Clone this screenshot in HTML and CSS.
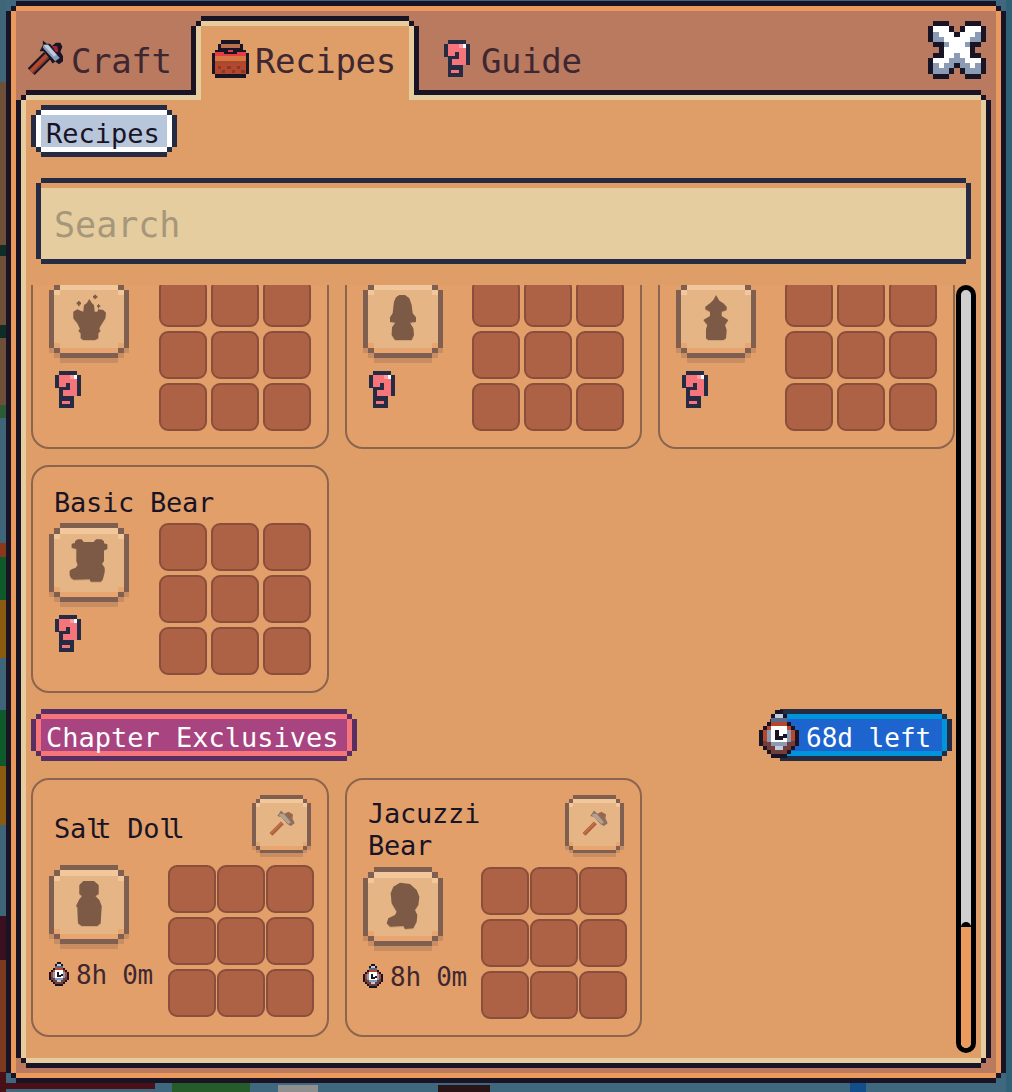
FILE: index.html
```html
<!DOCTYPE html>
<html lang="en">
<head>
<meta charset="utf-8">
<title>Recipes</title>
<link rel="stylesheet" href="styles.css">
</head>
<body>
<svg class="defs" width="0" height="0" aria-hidden="true">
  <symbol id="box" viewBox="0 0 80 84">
    <g shape-rendering="crispEdges">
      <path fill="#c98d63" d="M11 79h58v5H11zM5 74h6v5H5zM69 74h6v5h-6zM0 69h5v5H0zM75 69h5v5h-5z"/>
      <path fill="#e5b586" d="M5 11h70v58H5zM11 5h58v6H11z"/>
      <path fill="#f2c79b" d="M11 5h58v6H11zM5 11h6v5H5zM69 11h6v5h-6z"/>
      <path fill="#e8a56f" d="M11 69h58v5H11zM5 64h6v5H5zM69 64h6v5h-6z"/>
      <path fill="#7f6050" d="M11 0h58v5H11zM5 5h6v6H5zM69 5h6v6h-6zM0 11h5v58H0zM75 11h5v58h-5zM5 69h6v5H5zM69 69h6v5h-6zM11 74h58v5H11z"/>
    </g>
  </symbol>
  <symbol id="ques" viewBox="0 0 26 38">
    <g shape-rendering="crispEdges">
      <path fill="#262b44" d="M4 0h18v4h4v21h-7v12H4V17H0V4h4z"/>
      <path fill="#f6757a" d="M4 4h18v21H8v-6h7v-7h-4v4H4zM7 30h8v3H7z"/>
      <path fill="#ff9ca0" d="M15 4h4v4h-4z"/>
      <path fill="#fff" d="M19 4h3v4h-3z"/>
    </g>
  </symbol>
  <symbol id="clock" viewBox="27 33 120 143">
    <g shape-rendering="crispEdges">
      <path fill="#181425" d="M75 33h24v12h12v23h12v12h12v11h12v48h-12v12h-12v12h-12v12H63v-12H51v-12H39v-12H27V91h12V80h12V68h12V45h12z"/>
      <path fill="#c0cbdc" d="M75 45h24v12H75z"/>
      <path fill="#5a6988" d="M63 57h48v11H63z"/>
      <path fill="#b5482c" d="M63 68h48v12h12v12h12v33H39V92h12V80h12z"/>
      <path fill="#733e39" d="M39 125h96v14h-12v12h-12v12H63v-12H51v-12H39z"/>
      <path fill="#8b9bb4" d="M51 92h72v36h-12v12H63v-12H51z"/>
      <path fill="#c0cbdc" d="M75 140h24v12H75z"/>
      <path fill="#fff" d="M63 80h48v48H63z"/>
      <path fill="#181425" d="M75 92h12v18h12v-6h12v12H99v6H75z"/>
    </g>
  </symbol>
  <symbol id="hammer" viewBox="78 118 114 114">
    <path fill="none" stroke="#181425" stroke-width="30" d="M94 214l50-50"/>
    <path fill="none" stroke="#b5482c" stroke-width="16" d="M94 214l50-50"/>
    <path fill="none" stroke="#733e39" stroke-width="5" d="M98 219l50-50"/>
    <path fill="#181425" d="M130 118l12 10h10l6 7 12-10h14l6 12-6 16 6 10 8 14-18 14-12-8-8 6-14-22-14-16h-12l10-18z"/>
    <path fill="#a22633" d="M158 135h16l4 16-8 4z"/>
    <path fill="#8b9bb4" d="M132 130h14l36 42-14 10-38-42z"/>
    <path fill="#c0cbdc" d="M136 132h10l26 30-8 6-30-34z"/>
  </symbol>
  <symbol id="hammer-soft" viewBox="0 0 77 77">
    <path fill="none" stroke="#a55f40" stroke-width="12" d="M6 71l34-34"/>
    <path fill="none" stroke="#c96f43" stroke-width="5" d="M6 69l32-32"/>
    <path fill="#8d6f5e" d="M36 0l10 10 12-6 14 8-2 12 7 14-12 8-10-6-18-20-12-4z"/>
    <path fill="#b3a092" d="M32 10h12l22 26-8 4-28-26z"/>
    <path fill="#a8613f" d="M52 8h14v12l-6 2z"/>
  </symbol>
</svg>

<main class="window">
  <nav class="tabs">
    <div class="tab tab-craft">
      <svg class="tab-icon"><use href="#hammer"/></svg>
      <span>Craft</span>
    </div>
    <div class="tab tab-active">
      <svg class="tab-icon" viewBox="635 118 110 112">
        <g shape-rendering="crispEdges">
          <path fill="#181425" d="M663 118h55v12h9v18h8v8h10v64h-10v10h-90v-10h-10v-64h10v-8h9v-18h9z"/>
          <path fill="#b86f50" d="M663 130h55v10h-55z"/>
          <path fill="#e43b44" d="M645 152h27v13h-27zM708 152h27v13h-27zM672 158h36v7h-36zM682 146h16v6h-16z"/>
          <path fill="#d77643" d="M645 165h90v15h-90z"/>
          <path fill="#a9492e" d="M645 180h90v10h-90z"/>
          <path fill="#b5482c" d="M645 190h90v30h-90z"/>
          <path fill="#8a3a2a" d="M652 195h10v8h-10zM680 195h10v8h-10zM708 195h10v8h-10zM665 207h10v8h-10zM694 207h10v8h-10zM722 207h10v8h-10z"/>
        </g>
      </svg>
      <span>Recipes</span>
    </div>
    <div class="tab tab-guide">
      <svg class="tab-icon-q"><use href="#ques"/></svg>
      <span>Guide</span>
    </div>
    <svg class="close" viewBox="0 0 11 11" aria-label="Close">
      <g shape-rendering="crispEdges">
        <path fill="#fff" d="M1 1h3v1h1v1h1V2h1V1h3v3H8v5h2v1H7V9H6V8H5v1H4v1H1V9h2V4H1z"/>
        <path fill="#fff" d="M1 7h9v2H1z"/>
        <path fill="#8b9bb4" d="M1 2h1v1H1zM9 2h1v1H9zM1 3h2v1H1zM8 3h2v1H8zM3 4h1v1H3zM7 4h1v1H7zM5 6h1v1H5zM4 7h3v1H4zM1 8h1v1H1zM3 8h2v1H3zM6 8h2v1H6zM9 8h1v1H9zM1 9h3v1H1zM7 9h3v1H7z"/>
        <path fill="#181425" d="M1 0h3v1H1zM7 0h3v1H7zM0 1h1v3H0zM10 1h1v3h-1zM4 1h1v1H4zM6 1h1v1H6zM5 2h1v1H5zM1 4h2v1H1zM8 4h2v1H8zM2 5h1v1H2zM8 5h1v1H8zM1 6h2v1H1zM8 6h2v1H8zM0 7h1v3H0zM10 7h1v3h-1zM5 8h1v1H5zM4 9h1v1H4zM6 9h1v1H6zM1 10h3v1H1zM7 10h3v1H7z"/>
      </g>
    </svg>
  </nav>

  <section class="panel">
    <div class="pill pill-recipes"><span>Recipes</span></div>
    <div class="search">Search</div>

    <div class="list-row">
      <div class="list">
        <div class="list-inner">
          <div class="grid">
            <article class="card">
              <div class="title title-hidden"></div>
              <div class="card-body">
                <div class="card-left">
                  <svg class="ibox" viewBox="0 0 80 84"><use href="#box" width="80" height="84"/>
                    <g class="sil" transform="scale(.3333) translate(-87 -27)">
                      <path d="M208 87l8 13 6 5 2 20h8l3-7 15 2 8 8-2 17-16 25-2 8 4 4-7 8v15l-10 5h-35l-8-5v-15l-7-8 5-6-8-16-12-15v-20l12-7 10 4 8 3 2-20 8-5z"/>
                      <path d="M219 77h4v-3h5v3h4v6h-4v3h-5v-3h-4zM170 97h4v-4h5v4h4v6h-4v4h-5v-4h-4zM231 106h3v-4h3v4h4v4h-4v5h-3v-5h-3z"/>
                    </g>
                  </svg>
                  <svg class="ques"><use href="#ques"/></svg>
                </div>
                <div class="slots">
                  <i></i><i></i><i></i><i></i><i></i><i></i><i></i><i></i><i></i>
                </div>
              </div>
            </article>
            <article class="card">
              <div class="title title-hidden"></div>
              <div class="card-body">
                <div class="card-left">
                  <svg class="ibox" viewBox="0 0 80 84"><use href="#box" width="80" height="84"/>
                    <g class="sil" transform="scale(.3333) translate(-39 -27)">
                      <path d="M148 75h17l13 10 7 20 3 25 10 12v13l-18 3 10 17 2 20-7 15h-50l-10-15 1-23 10-14-16-3v-13l8-12 4-35 6-13z"/>
                    </g>
                  </svg>
                  <svg class="ques"><use href="#ques"/></svg>
                </div>
                <div class="slots">
                  <i></i><i></i><i></i><i></i><i></i><i></i><i></i><i></i><i></i>
                </div>
              </div>
            </article>
            <article class="card">
              <div class="title title-hidden"></div>
              <div class="card-body">
                <div class="card-left">
                  <svg class="ibox" viewBox="0 0 80 84"><use href="#box" width="80" height="84"/>
                    <g class="sil" transform="scale(.3333) translate(-978 -27)">
                      <path d="M1098 75l10 17 12 8 10 10v10l-15 5v13l20 12-10 15 5 15-2 25-8 5h-45l-7-5v-27l4-13-12-15 20-12v-13l-14-7v-8l14-10 10-10z"/>
                    </g>
                  </svg>
                  <svg class="ques"><use href="#ques"/></svg>
                </div>
                <div class="slots">
                  <i></i><i></i><i></i><i></i><i></i><i></i><i></i><i></i><i></i>
                </div>
              </div>
            </article>
            <article class="card">
              <div class="title">Basic Bear</div>
              <div class="card-body">
                <div class="card-left">
                  <svg class="ibox" viewBox="0 0 80 84"><use href="#box" width="80" height="84"/>
                    <g class="sil" transform="scale(.3333) translate(-87 -188)">
                      <path d="M165 243l8-6h12l6 8h30l7-8h16l8 6v6l10 3v14l-10 4v32l-6 8 8 12v14l-6 22-6 6h-30l-3-7-48 1-8-5-4-8v-14l6-4 12-5 6-8-4-12v-36l-14-4v-12l10-2z"/>
                    </g>
                  </svg>
                  <svg class="ques"><use href="#ques"/></svg>
                </div>
                <div class="slots">
                  <i></i><i></i><i></i><i></i><i></i><i></i><i></i><i></i><i></i>
                </div>
              </div>
            </article>
          </div>

          <div class="section-head">
            <div class="pill pill-chapter"><span>Chapter Exclusives</span></div>
            <div class="pill pill-time">
              <svg class="time-clock"><use href="#clock"/></svg>
              <span>68d left</span>
            </div>
          </div>

          <div class="grid">
            <article class="card card-chapter">
              <div class="card-head">
                <div class="title">Sa<span class="narrow">l</span>t Do<span class="narrow">ll</span></div>
                <svg class="ibox-small" viewBox="0 0 80 84"><use href="#box" width="80" height="84"/><use href="#hammer-soft" x="23" y="21" width="35" height="35"/></svg>
              </div>
              <div class="card-body">
                <div class="card-left">
                  <svg class="ibox" viewBox="0 0 80 84"><use href="#box" width="80" height="84"/>
                    <g class="sil" transform="scale(.3333) translate(-87 -285)">
                      <path d="M190 333h32l14 12v27l-10 6 12 12 7 18-3 52-10 8h-47l-11-8-2-48-4-4 10-20 8-10-8-6v-27z"/>
                    </g>
                  </svg>
                  <div class="brew"><svg class="brew-clock"><use href="#clock"/></svg><span>8h 0m</span></div>
                </div>
                <div class="slots">
                  <i></i><i></i><i></i><i></i><i></i><i></i><i></i><i></i><i></i>
                </div>
              </div>
            </article>
            <article class="card card-chapter">
              <div class="card-head">
                <div class="title">Jacuzzi Bear</div>
                <svg class="ibox-small" viewBox="0 0 80 84"><use href="#box" width="80" height="84"/><use href="#hammer-soft" x="23" y="21" width="35" height="35"/></svg>
              </div>
              <div class="card-body">
                <div class="card-left">
                  <svg class="ibox" viewBox="0 0 80 84"><use href="#box" width="80" height="84"/>
                    <g class="sil" transform="scale(.3333) translate(-39 -261)">
                      <path d="M150 308l30 4 20 18 8 20-3 25-10 15 7 15-2 20-10 20-25 2-5-9-40 2-10-10 5-15 20-10 5-10-15-25-3-30 8-20z"/>
                    </g>
                  </svg>
                  <div class="brew"><svg class="brew-clock"><use href="#clock"/></svg><span>8h 0m</span></div>
                </div>
                <div class="slots">
                  <i></i><i></i><i></i><i></i><i></i><i></i><i></i><i></i><i></i>
                </div>
              </div>
            </article>
          </div>
        </div>
      </div>
      <div class="scrollbar"><div class="thumb"></div></div>
    </div>
  </section>
</main>
</body>
</html>
```
FILE: styles.css
```css
* { box-sizing: border-box; }

html, body { margin: 0; height: 1092px; overflow: hidden; }

body {
  padding: 11px 16px 19px;
  font-family: "DejaVu Sans Mono", "Liberation Mono", monospace;
  background-color: #3f677e;
  background-image:
    linear-gradient(to bottom,
      #3f6579 0 82px, #6e4f38 82px 245px, #0f2c27 245px 256px, #6e4f38 256px 325px,
      #0f2c27 325px 338px, #6e4f38 338px 405px, #2e5a36 405px 418px, #3f6579 418px 543px,
      #8a3a1a 543px 557px, #0f5a2a 557px 600px, #8a5a10 600px 658px, #3f6579 658px 710px,
      #0f5a2a 710px 766px, #8a5a10 766px 825px, #3f6579 825px 916px,
      #3a1020 916px 960px, #7a3a20 960px 1072px, #4a1018 1072px 1092px),
    linear-gradient(#4a1018, #4a1018),
    linear-gradient(#265c2a, #265c2a),
    linear-gradient(#8f8f8f, #8f8f8f),
    linear-gradient(#2a1418, #2a1418),
    linear-gradient(#124e89, #124e89),
    linear-gradient(#2f6276, #2f6276);
  background-repeat: no-repeat;
  background-size: 6px 100%, 155px 6px, 78px 9px, 40px 7px, 52px 7px, 16px 9px, 6px 100%;
  background-position: 0 0, 0 1083px, 172px 1083px, 278px 1085px, 438px 1085px, 850px 1083px, 1006px 0;
}

.defs { display: block; }

.window {
  display: flex;
  flex-direction: column;
  height: 1062px;
  padding: 0 15px 15px 10px;
  background: #b97a5f;
  box-shadow:
    -5px 0 0 #eb9a5e, 5px 0 0 #eb9a5e, 0 -5px 0 #eb9a5e, 0 5px 0 #eb9a5e,
    -10px 0 0 #181425, 10px 0 0 #181425, 0 -10px 0 #181425, 0 10px 0 #181425,
    -5px -5px 0 #181425, 5px -5px 0 #181425, -5px 5px 0 #181425, 5px 5px 0 #181425;
}

/* Tabs */
.tabs {
  display: flex;
  align-items: flex-start;
  height: 89px;
  margin-left: -10px;
  margin-right: -5px;
  flex: none;
}

.tab {
  display: flex;
  align-items: center;
  height: 38px;
  margin-top: 29px;
  font-size: 34px;
  letter-spacing: -0.35px;
  color: #3e2731;
}

.tab span { padding-top: 4px; }

.tab-icon { width: 37px; height: 38px; flex: none; }
.tab-icon-q { width: 28px; height: 38px; flex: none; }

.tab-craft { width: 165px; margin-left: 10px; gap: 8px; }

.tab-active {
  position: relative;
  z-index: 1;
  width: 208px;
  height: 74px;
  margin: 15px 0 0 10px;
  padding: 14px 0 22px 11px;
  gap: 6px;
  background: #df9d68;
  box-shadow:
    -5px 0 0 #e5cda0, 5px 0 0 #e5cda0, 0 -5px 0 #e5cda0,
    -10px 0 0 #181425, 10px 0 0 #181425, 0 -10px 0 #181425,
    -5px -5px 0 #181425, 5px -5px 0 #181425;
  clip-path: polygon(-10px -10px, calc(100% + 10px) -10px, calc(100% + 10px) 69px, calc(100% + 5px) 69px, calc(100% + 5px) 74px, -5px 74px, -5px 69px, -10px 69px);
}

.tab-guide { margin-left: 34px; gap: 10px; }

.close { width: 58px; height: 58px; margin: 10px 0 0 auto; flex: none; }

/* Panel */
.panel {
  flex: 1;
  min-height: 0;
  display: flex;
  flex-direction: column;
  background: #df9d68;
  box-shadow:
    -5px 0 0 #e5cda0, 5px 0 0 #e5cda0, 0 -5px 0 #e5cda0, 0 5px 0 #e5cda0,
    -10px 0 0 #181425, 10px 0 0 #181425, 0 -10px 0 #181425, 0 10px 0 #181425,
    -5px -5px 0 #181425, 5px -5px 0 #181425, -5px 5px 0 #181425, 5px 5px 0 #181425;
}

.pill {
  display: flex;
  align-items: center;
  height: 32px;
  font-size: 27px;
  line-height: 32px;
  white-space: nowrap;
  flex: none;
}

.pill span { padding-top: 5px; }

.pill-recipes {
  width: 126px;
  margin: 15px 0 0 15px;
  padding-left: 5px;
  color: #181425;
  background: #b8c6dc;
  box-shadow:
    -5px 0 0 #fff, 5px 0 0 #fff, 0 -5px 0 #fff, 0 5px 0 #fff,
    -10px 0 0 #262b44, 10px 0 0 #262b44, 0 -10px 0 #262b44, 0 10px 0 #262b44,
    -5px -5px 0 #262b44, 5px -5px 0 #262b44, -5px 5px 0 #262b44, 5px 5px 0 #262b44;
}

.search {
  width: 925px;
  height: 71px;
  margin: 41px 0 0 15px;
  padding-left: 13px;
  font-size: 35px;
  line-height: 75px;
  color: #a6977a;
  background: #e5cda0;
  flex: none;
  box-shadow:
    0 -5px 0 #df9d68,
    -5px 0 0 #262b44, 5px 0 0 #262b44, 0 5px 0 #262b44, 0 -10px 0 #262b44,
    -5px -5px 0 #262b44, 5px -5px 0 #262b44;
}

.list-row {
  flex: 1;
  min-height: 0;
  display: flex;
  margin-top: 26px;
}

.list {
  width: 930px;
  height: 100%;
  overflow: hidden;
  padding-left: 5px;
  flex: none;
}

.list-inner { margin-top: -64px; }

.grid {
  display: grid;
  grid-template-columns: 298px 297px 297px;
  gap: 16px;
  width: 924px;
}

/* Cards */
.card {
  height: 228px;
  padding: 18px 16px 0 16px;
  background: #e39f69;
  border: 2px solid #8c654e;
  border-radius: 18px;
}

.title {
  height: 32px;
  margin: 0 0 6px 5px;
  font-size: 27px;
  line-height: 36px;
  letter-spacing: -0.25px;
  color: #181425;
}

.narrow { letter-spacing: -7px; }

.card-body {
  display: flex;
  justify-content: space-between;
}

.card-left { width: 80px; flex: none; }

.ibox { display: block; width: 80px; height: 84px; }

.sil { fill: #7c5a46; filter: drop-shadow(0 3px 0 #cfa277); }

.ques { display: block; width: 26px; height: 38px; margin: 8px 0 0 6px; }

.slots {
  display: grid;
  grid-template-columns: repeat(3, 48px);
  grid-auto-rows: 48px;
  gap: 4px;
}

.slots i {
  display: block;
  background: #ad6145;
  border: 2px solid #8a4e3c;
  border-radius: 9px;
}

.card-chapter { height: 259px; padding: 15px 13px 0 16px; }

.card-chapter .slots { column-gap: 1px; }

.card-head {
  display: flex;
  justify-content: space-between;
  align-items: center;
  min-height: 62px;
  margin-bottom: 8px;
}

.card-head .title {
  height: auto;
  max-width: 150px;
  margin: 3px 0 -3px 5px;
  line-height: 32px;
}

.ibox-small { display: block; width: 59px; height: 62px; margin: 0 3px 0 0; flex: none; align-self: flex-start; }

.brew {
  display: flex;
  align-items: center;
  gap: 7px;
  margin-top: 8px;
  font-size: 26px;
  letter-spacing: -0.25px;
  color: #3e2731;
  white-space: nowrap;
}

.brew span { padding-top: 3px; }

.brew-clock { width: 20px; height: 24px; flex: none; }

/* Section header */
.section-head {
  display: flex;
  justify-content: space-between;
  align-items: center;
  height: 52px;
  margin: 16px 0 17px;
}

.pill-chapter {
  width: 306px;
  margin-left: 10px;
  padding-left: 5px;
  color: #fff;
  background: #a8447f;
  box-shadow:
    -5px 0 0 #f6757a, 5px 0 0 #f6757a, 0 -5px 0 #f6757a, 0 5px 0 #f6757a,
    -10px 0 0 #5a2e63, 10px 0 0 #5a2e63, 0 -10px 0 #5a2e63, 0 10px 0 #5a2e63,
    -5px -5px 0 #5a2e63, 5px -5px 0 #5a2e63, -5px 5px 0 #5a2e63, 5px 5px 0 #5a2e63;
}

.pill-time {
  position: relative;
  width: 162px;
  margin-right: 14px;
  padding-left: 26px;
  font-size: 26px;
  color: #fff;
  background: #1d64cf;
  box-shadow:
    -5px 0 0 #0095db, 5px 0 0 #0095db, 0 -5px 0 #0095db, 0 5px 0 #0095db,
    -10px 0 0 #262b44, 10px 0 0 #262b44, 0 -10px 0 #262b44, 0 10px 0 #262b44,
    -5px -5px 0 #262b44, 5px -5px 0 #262b44, -5px 5px 0 #262b44, 5px 5px 0 #262b44;
}

.time-clock {
  position: absolute;
  left: -21px;
  top: -9px;
  width: 40px;
  height: 48px;
}

/* Scrollbar */
.scrollbar {
  display: flex;
  flex-direction: column;
  justify-content: flex-end;
  width: 20px;
  margin-bottom: 5px;
  background: #cfcfcf;
  border: 5px solid #000;
  border-radius: 10px;
  overflow: hidden;
  flex: none;
}

.thumb {
  height: 126px;
  background: #eb9a5e;
  border-top: 5px solid #000;
  border-radius: 5px 5px 0 0;
}
```
